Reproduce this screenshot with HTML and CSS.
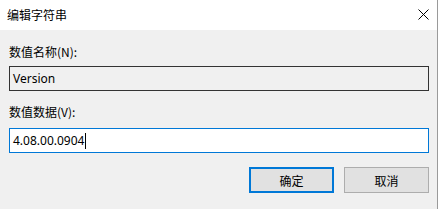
FILE: index.html
```html
<!DOCTYPE html>
<html>
<head>
<meta charset="utf-8">
<link rel="stylesheet" href="styles.css">
</head>
<body>
<div class="window">
  <div class="titlebar">
    <span class="title">编辑字符串</span>
    <svg class="close" width="11" height="11" viewBox="0 0 11 11"><path d="M0.5 0.5 L10.5 10.5 M10.5 0.5 L0.5 10.5" stroke="#000" stroke-width="1" fill="none"/></svg>
  </div>
  <div class="content">
    <div class="label first">数值名称(N):</div>
    <div class="field readonly">Version</div>
    <div class="label second">数值数据(V):</div>
    <div class="field active"><span>4.08.00.0904</span><span class="caret"></span></div>
    <div class="buttons">
      <div class="btn default">确定</div>
      <div class="btn">取消</div>
    </div>
  </div>
</div>
</body>
</html>
```
FILE: styles.css
```css
html, body {
  margin: 0;
  padding: 0;
  background: #ffffff;
}
body {
  width: 441px;
  height: 209px;
  overflow: hidden;
  font-family: "Noto Sans", "Noto Sans CJK SC", sans-serif;
  font-size: 12px;
  color: #000;
}
.window {
  width: 437px;
  height: 209px;
  border-right: 1px solid #9a9a9a;
  background: #f0f0f0;
  display: flex;
  flex-direction: column;
}
.titlebar {
  height: 30px;
  background: #ffffff;
  display: flex;
  align-items: center;
  justify-content: space-between;
  padding: 0 8px 0 7px;
}
.title {
  font-family: "Noto Sans CJK SC", sans-serif;
  font-size: 12px;
  line-height: 16px;
  position: relative;
  top: 0px;
}
.close {
  display: block;
  margin-top: -2px;
}
.content {
  padding: 14px 0 0 9px;
  width: 420px;
  display: flex;
  flex-direction: column;
}
.label {
  font-family: "Noto Sans CJK SC", sans-serif;
  font-size: 12px;
  line-height: 16px;
  height: 16px;
  padding-left: 0;
}
.label.first { margin-bottom: 6px; }
.label.second { margin-top: 13px; margin-bottom: 8px; }
.field {
  box-sizing: border-box;
  height: 25px;
  width: 420px;
  display: flex;
  align-items: center;
  padding-left: 3px;
  font-family: "Noto Sans", sans-serif;
  font-size: 12px;
}
.field.readonly {
  border: 1px solid #333333;
  background: #f0f0f0;
}
.field.active {
  border: 1px solid #0078d7;
  background: #ffffff;
}
.caret {
  display: inline-block;
  width: 1px;
  height: 16px;
  background: #000;
  margin-left: 1px;
}
.buttons {
  display: flex;
  justify-content: flex-end;
  gap: 10px;
  margin-top: 14px;
  width: 420px;
}
.btn {
  box-sizing: border-box;
  width: 85px;
  height: 26px;
  background: #e1e1e1;
  border: 1px solid #adadad;
  display: flex;
  align-items: center;
  justify-content: center;
  font-family: "Noto Sans CJK SC", sans-serif;
  font-size: 12px;
}
.btn.default {
  border: 2px solid #0078d7;
}
```
